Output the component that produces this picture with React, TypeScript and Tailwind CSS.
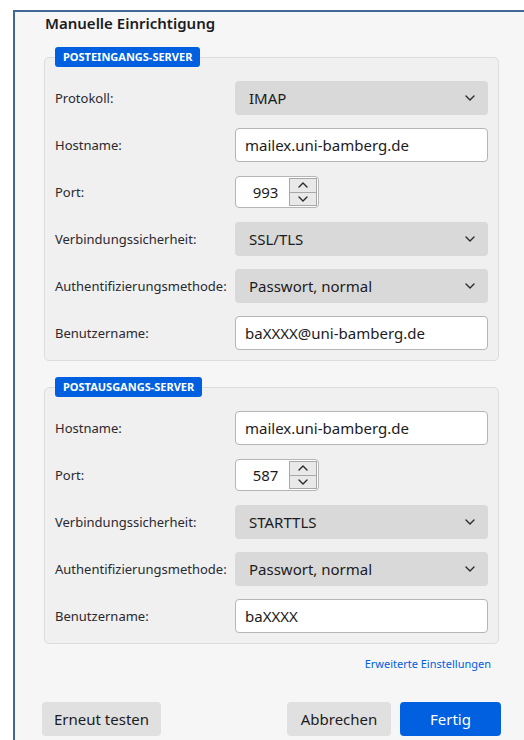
import React from "react";

const font = { fontFamily: '"Noto Sans", "Open Sans", sans-serif' };

function Chevron({ up = false, className = "" }: { up?: boolean; className?: string }) {
  return (
    <svg width="10" height="6" viewBox="0 0 10 6" className={className}>
      <path
        d={up ? "M1 5 L5 1 L9 5" : "M1 1 L5 5 L9 1"}
        fill="none"
        stroke="#2b2b2b"
        strokeWidth="1.4"
        strokeLinecap="round"
        strokeLinejoin="round"
      />
    </svg>
  );
}

function Row({ label, children }: { label: string; children: React.ReactNode }) {
  return (
    <div className="flex h-[34px] items-center">
      <div className="w-[180px] shrink-0 pt-[1px] text-[13px] text-[#2a2930]">{label}</div>
      {children}
    </div>
  );
}

function Select({ value }: { value: string }) {
  return (
    <div className="flex h-[34px] w-[253px] items-center justify-between rounded-[4px] bg-[#d9d9d9] pl-[14px] pr-[13px] text-[15px] text-[#1c1b22]">
      <span>{value}</span>
      <Chevron />
    </div>
  );
}

function TextInput({ value }: { value: string }) {
  return (
    <div className="flex h-[34px] w-[253px] items-center rounded-[4px] border border-[#b5b5b5] bg-white pl-[9px] text-[15px] text-[#1c1b22]">
      {value}
    </div>
  );
}

function PortInput({ value }: { value: string }) {
  return (
    <div className="flex h-[32px] w-[84px] items-center rounded-[4px] border border-[#b5b5b5] bg-white pr-[1px]">
      <span className="flex-1 pl-[6px] text-center text-[15px] text-[#1c1b22]">{value}</span>
      <div className="flex h-[28px] w-[28px] flex-col border border-[#a8a8a8]">
        <div className="flex flex-1 items-center justify-center border-b border-[#a8a8a8] bg-[#e9e9e9]">
          <Chevron up />
        </div>
        <div className="flex flex-1 items-center justify-center bg-[#e9e9e9]">
          <Chevron />
        </div>
      </div>
    </div>
  );
}

function Group({ title, children }: { title: string; children: React.ReactNode }) {
  return (
    <div className="w-[455px] rounded-[5px] border border-[#dcdcdc] bg-[#f0f0f0] px-[10px] pb-[10px]">
      <div className="-mt-[11px] flex h-[20px] w-fit items-center rounded-[3px] bg-[#0060df] px-[8px] text-[11px] font-bold uppercase text-white">
        {title}
      </div>
      <div className="mt-[14px] flex flex-col gap-[13px]">{children}</div>
    </div>
  );
}

export default function App() {
  return (
    <div className="h-[740px] w-[524px] overflow-hidden bg-white pt-[10px]" style={font}>
      <div className="ml-[13px] h-full border-l-2 border-t-2 border-[#3f679a] bg-[#f6f6f6] pl-[29px]">
        <h1 className="ml-[1px] mt-[1px] h-[20px] text-[15px] font-semibold leading-[20px] text-[#1c1b22]">
          Manuelle Einrichtigung
        </h1>

        <div className="mt-[24px]">
          <Group title="Posteingangs-Server">
            <Row label="Protokoll:">
              <Select value="IMAP" />
            </Row>
            <Row label="Hostname:">
              <TextInput value="mailex.uni-bamberg.de" />
            </Row>
            <Row label="Port:">
              <PortInput value="993" />
            </Row>
            <Row label="Verbindungssicherheit:">
              <Select value="SSL/TLS" />
            </Row>
            <Row label="Authentifizierungsmethode:">
              <Select value="Passwort, normal" />
            </Row>
            <Row label="Benutzername:">
              <TextInput value="baXXXX@uni-bamberg.de" />
            </Row>
          </Group>
        </div>

        <div className="mt-[26px]">
          <Group title="Postausgangs-Server">
            <Row label="Hostname:">
              <TextInput value="mailex.uni-bamberg.de" />
            </Row>
            <Row label="Port:">
              <PortInput value="587" />
            </Row>
            <Row label="Verbindungssicherheit:">
              <Select value="STARTTLS" />
            </Row>
            <Row label="Authentifizierungsmethode:">
              <Select value="Passwort, normal" />
            </Row>
            <Row label="Benutzername:">
              <TextInput value="baXXXX" />
            </Row>
          </Group>
        </div>

        <div className="mt-[13px] flex w-[447px] justify-end">
          <a className="text-[11px] leading-[14px] text-[#0060df]">Erweiterte Einstellungen</a>
        </div>

        <div className="-ml-[2px] mt-[31px] flex w-[459px] items-center">
          <button className="h-[34px] w-[119px] rounded-[4px] bg-[#e0e0e0] text-[15px] text-[#1c1b22]">
            Erneut testen
          </button>
          <div className="flex-1" />
          <button className="h-[34px] w-[104px] rounded-[4px] bg-[#e0e0e0] text-[15px] text-[#1c1b22]">
            Abbrechen
          </button>
          <button className="ml-[9px] h-[34px] w-[101px] rounded-[4px] bg-[#0060df] text-[15px] text-white">
            Fertig
          </button>
        </div>
      </div>
    </div>
  );
}
